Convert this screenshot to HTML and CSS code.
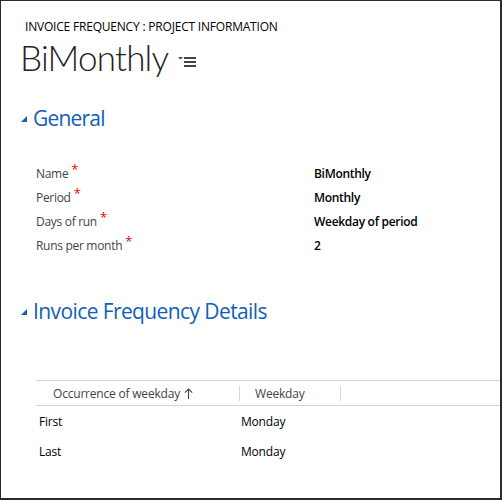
FILE: index.html
```html
<!DOCTYPE html>
<html>
<head>
<meta charset="utf-8">
<link rel="stylesheet" href="styles.css">
</head>
<body>
<div class="frame">
  <div class="entity">INVOICE FREQUENCY : PROJECT INFORMATION</div>
  <div class="titlebar">
    <h1 class="title">BiMonthly</h1>
    <svg class="menu" width="19" height="12" viewBox="0 0 19 12">
      <path d="M0 1 H5 L2.5 3.5 Z" fill="#444"/>
      <rect x="6" y="1" width="12" height="2" fill="#444"/>
      <rect x="6" y="5" width="12" height="2" fill="#444"/>
      <rect x="6" y="9" width="12" height="2" fill="#444"/>
    </svg>
  </div>

  <section class="section general">
    <h2 class="sec-head"><span class="tri"></span>General</h2>
    <div class="fields">
      <div class="field"><span class="label">Name<span class="req">*</span></span><span class="value">BiMonthly</span></div>
      <div class="field"><span class="label">Period<span class="req">*</span></span><span class="value">Monthly</span></div>
      <div class="field"><span class="label">Days of run<span class="req">*</span></span><span class="value">Weekday of period</span></div>
      <div class="field"><span class="label">Runs per month<span class="req">*</span></span><span class="value">2</span></div>
    </div>
  </section>

  <section class="section details">
    <h2 class="sec-head"><span class="tri"></span>Invoice Frequency Details</h2>
    <div class="grid">
      <div class="grid-head">
        <div class="col c1">Occurrence of weekday <svg class="arrow" width="9" height="11" viewBox="0 0 9 11"><path d="M4.5 1 V11 M0.8 4.7 L4.5 1 L8.2 4.7" stroke="#444" stroke-width="1.1" fill="none"/></svg></div>
        <div class="col c2">Weekday</div>
      </div>
      <div class="grid-row"><div class="cell c1">First</div><div class="cell c2">Monday</div></div>
      <div class="grid-row"><div class="cell c1">Last</div><div class="cell c2">Monday</div></div>
    </div>
  </section>
</div>
</body>
</html>
```

FILE: styles.css
```css
html, body { margin: 0; padding: 0; background: #fff; }
body { font-family: "Open Sans", "Noto Sans", sans-serif; color: #000; }
.frame {
  box-sizing: border-box;
  width: 502px;
  height: 500px;
  border: 1px solid #2b2b2b;
  border-width: 1px 2px 2px 1px;
  overflow: hidden;
  padding: 18px 0 0 0;
}
.entity {
  font-size: 12px;
  line-height: 16px;
  margin-left: 24px;
  color: #000;
  letter-spacing: -0.2px;
}
.titlebar { display: flex; align-items: center; margin-left: 19px; height: 42px; margin-top: 1px; }
.title {
  margin: 0;
  font-family: "Lato", "Open Sans", sans-serif;
  font-weight: 300;
  font-size: 35px;
  line-height: 42px;
  letter-spacing: -0.8px;
  color: #222;
}
.menu { margin-left: 10px; margin-top: 9px; }
.sec-head {
  margin: 0;
  display: flex;
  align-items: center;
  font-weight: 400;
  font-size: 21px;
  letter-spacing: -0.6px;
  color: #1160b7;
  padding-left: 20px;
  height: 30px;
}
.general .sec-head { margin-top: 25px; letter-spacing: -0.8px; }
.tri {
  width: 0; height: 0;
  border-left: 6px solid transparent;
  border-bottom: 6px solid #1160b7;
  margin-right: 6px;
  margin-top: 2px;
}
.fields { margin-top: 28px; padding-left: 35px; }
.field { display: flex; height: 24px; align-items: center; font-size: 12px; letter-spacing: -0.3px; }
.label { width: 278px; color: #444; }
.req { color: #e00; font-size: 13px; position: relative; top: -4px; margin-left: 3px; }
.value { font-weight: 600; color: #000; }
.details .sec-head { margin-top: 39px; }
.grid { margin-top: 54px; margin-left: 35px; font-size: 12px; letter-spacing: -0.2px; }
.grid-head {
  display: flex;
  box-sizing: border-box;
  border-top: 1px solid #d4d4d4;
  border-bottom: 1px solid #d4d4d4;
  height: 26px;
  align-items: center;
  color: #444;
}
.grid-head .col { height: 15px; line-height: 15px; border-right: 1px solid #d8d8d8; box-sizing: border-box; display: flex; align-items: center; }
.grid-head .c1 { width: 204px; padding-left: 17px; }
.grid-head .c2 { width: 101px; padding-left: 15px; }
.arrow { margin-left: 4px; }
.grid-row { display: flex; height: 30px; align-items: center; color: #000; }
.grid-row .c1 { width: 205px; padding-left: 3px; box-sizing: border-box; }
```
